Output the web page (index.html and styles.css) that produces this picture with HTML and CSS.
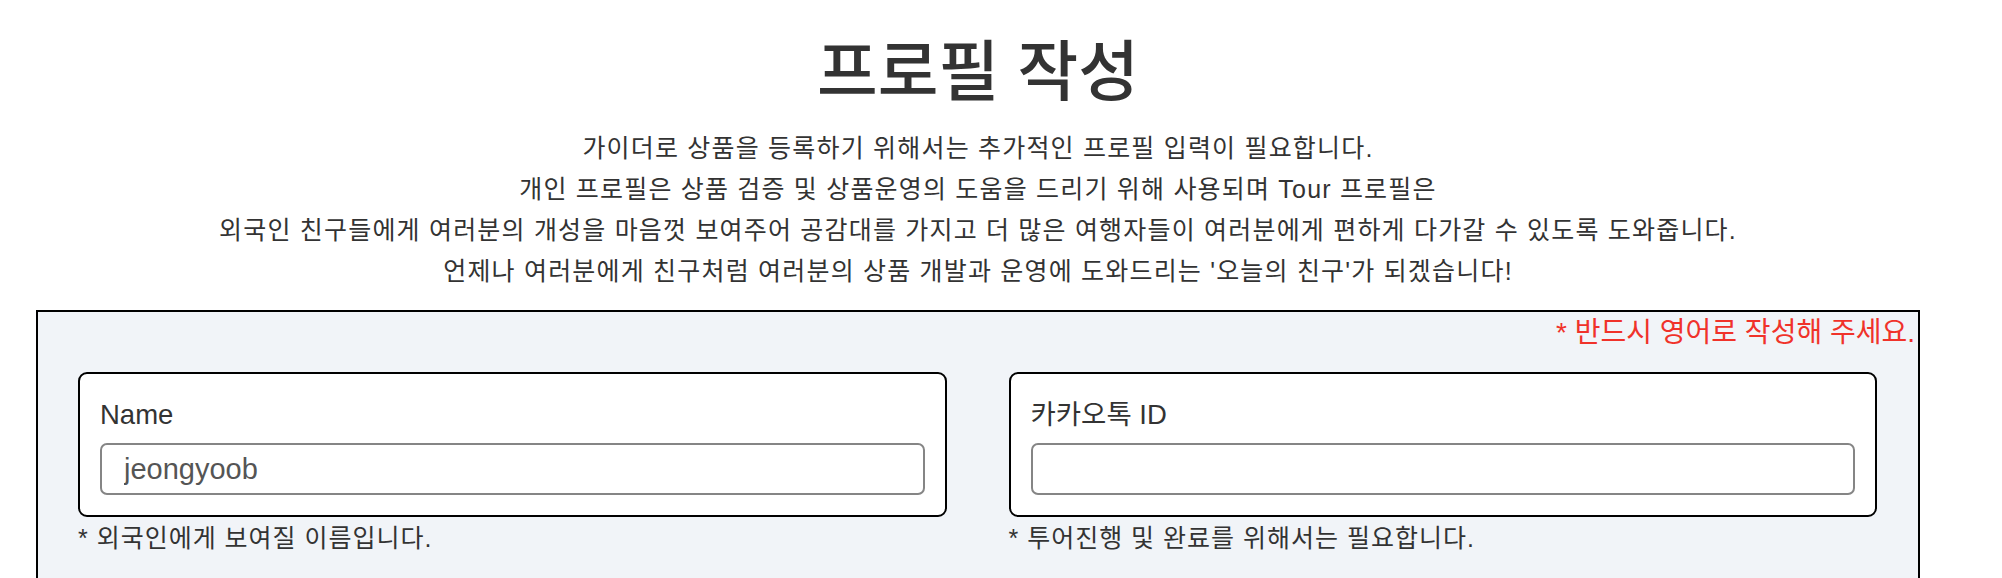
FILE: index.html
```html
<!DOCTYPE html>
<html lang="ko">
<head>
<meta charset="utf-8">
<title>프로필 작성</title>
<link rel="stylesheet" href="styles.css">
</head>
<body>
<div class="page">
  <h1 class="title">프로필 작성</h1>
  <p class="intro">가이더로 상품을 등록하기 위해서는 추가적인 프로필 입력이 필요합니다.<br>개인 프로필은 상품 검증 및 상품운영의 도움을 드리기 위해 사용되며 Tour 프로필은<br>외국인 친구들에게 여러분의 개성을 마음껏 보여주어 공감대를 가지고 더 많은 여행자들이 여러분에게 편하게 다가갈 수 있도록 도와줍니다.<br>언제나 여러분에게 친구처럼 여러분의 상품 개발과 운영에 도와드리는 '오늘의 친구'가 되겠습니다!</p>
  <section class="form-box">
    <div class="notice">* 반드시 영어로 작성해 주세요.</div>
    <div class="fields">
      <div class="field">
        <div class="card">
          <label class="label" for="name">Name</label>
          <input class="input" id="name" type="text" value="jeongyoob">
        </div>
        <div class="hint">* 외국인에게 보여질 이름입니다.</div>
      </div>
      <div class="field">
        <div class="card">
          <label class="label" for="kakao">카카오톡 ID</label>
          <input class="input" id="kakao" type="text" value="">
        </div>
        <div class="hint">* 투어진행 및 완료를 위해서는 필요합니다.</div>
      </div>
    </div>
  </section>
</div>
</body>
</html>
```

FILE: styles.css
```css
html, body {
  margin: 0;
  padding: 0;
  background: #ffffff;
}
body {
  font-family: "Liberation Sans", "Noto Sans CJK KR", sans-serif;
  color: #333333;
}
.page {
  margin: 0 82px 0 36px;
  padding-top: 32px;
}
.title {
  margin: 0;
  font-size: 66px;
  line-height: 80px;
  font-weight: 500;
  text-align: center;
  color: #333333;
}
.intro {
  margin: 16px 0 18px;
  font-size: 25px;
  letter-spacing: 1.2px;
  line-height: 41px;
  text-align: center;
  color: #333333;
}
.form-box {
  border: 2px solid #000000;
  background: #f1f4f8;
  padding: 0 3px 120px 0;
}
.notice {
  text-align: right;
  color: #f0322a;
  font-size: 28px;
  line-height: 42px;
}
.fields {
  display: grid;
  grid-template-columns: 1fr 1fr;
  column-gap: 62px;
  padding: 0 38px 0 40px;
  margin-top: 18px;
}
.card {
  display: flex;
  flex-direction: column;
  background: #ffffff;
  border: 2px solid #000000;
  border-radius: 9px;
  padding: 26px 20px 20px;
}
.label {
  font-size: 27.5px;
  line-height: 30px;
  color: #333333;
}
.input {
  margin-top: 13px;
  height: 52px;
  box-sizing: border-box;
  border: 2px solid #858585;
  border-radius: 7px;
  padding: 0 22px;
  font-family: "Liberation Sans", "Noto Sans CJK KR", sans-serif;
  font-size: 29px;
  color: #555555;
  background: #ffffff;
  outline: none;
}
.hint {
  padding-top: 3px;
  font-size: 25px;
  letter-spacing: 1px;
  line-height: 36px;
  color: #333333;
}
```
